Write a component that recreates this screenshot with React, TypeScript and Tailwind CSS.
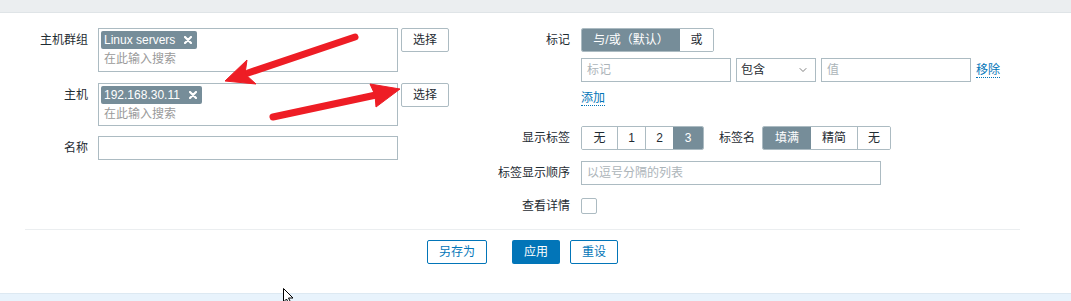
import { ChevronDown } from "lucide-react"

const font = { fontFamily: '"Liberation Sans", Arial, "Noto Sans CJK SC", sans-serif' }

function TagChip({ label }: { label: string }) {
  return (
    <span className="inline-flex h-[18px] items-center gap-[9px] rounded-[2px] bg-[#768d99] pl-[3px] pr-[5px] text-[12px] leading-[18px] text-white">
      {label}
      <svg width="8" height="8" viewBox="0 0 8 8">
        <path d="M1 1L7 7M7 1L1 7" stroke="white" strokeWidth="2.2" strokeLinecap="round" />
      </svg>
    </span>
  )
}

function MultiSelect({ tag, height }: { tag: string; height: string }) {
  return (
    <div className="flex items-start gap-[3px]">
      <div className={`w-[300px] ${height} border border-[#acbbc2] bg-white p-[2px]`}>
        <TagChip label={tag} />
        <div className="pl-[3px] text-[12px] leading-[20px] text-[#9a9a9a]">在此输入搜索</div>
      </div>
      <button className="h-[24px] w-[48px] rounded-[2px] border border-[#acbbc2] bg-white text-[12px] text-[#1f2c33]">
        选择
      </button>
    </div>
  )
}

function Segmented({ items, widths, active }: { items: string[]; widths: string[]; active: number }) {
  return (
    <div className="flex h-[24px] w-fit overflow-hidden rounded-[2px] border border-[#acbbc2]">
      {items.map((item, i) => (
        <div
          key={i}
          className={`flex items-center justify-center text-[12px] ${widths[i]} ${
            i === active ? "bg-[#768d99] text-white" : "bg-white text-[#1f2c33]"
          } ${i > 0 && i !== active && i - 1 !== active ? "border-l border-[#acbbc2]" : ""}`}
        >
          {item}
        </div>
      ))}
    </div>
  )
}

export default function App() {
  return (
    <div className="relative h-[301px] w-full overflow-hidden bg-white text-[#1f2c33]" style={font}>
      <div className="h-[13px] border-b border-[#dfe4e7] bg-[#ebeef0]" />

      <div className="ml-[25px] w-[995px] border-b border-[#ebeef0] pb-[11px] pt-[15px]">
        <div className="flex items-start">
          {/* left column */}
          <div className="grid w-[470px] grid-cols-[63px_1fr] content-start gap-x-[10px] text-[12px]">
            <div className="text-right leading-[24px]">主机群组</div>
            <MultiSelect tag="Linux servers" height="h-[44px]" />

            <div className="mt-[11px] text-right leading-[24px]">主机</div>
            <div className="mt-[11px]">
              <MultiSelect tag="192.168.30.11" height="h-[43px]" />
            </div>

            <div className="mt-[10px] text-right leading-[24px]">名称</div>
            <div className="mt-[10px]">
              <div className="h-[24px] w-[300px] border border-[#acbbc2] bg-white" />
            </div>
          </div>

          {/* right column */}
          <div className="grid grid-cols-[75px_1fr] content-start gap-x-[11px] text-[12px]">
            <div className="text-right leading-[24px]">标记</div>
            <div>
              <Segmented items={["与/或（默认）", "或"]} widths={["w-[98px]", "w-[33px]"]} active={0} />
              <div className="mt-[6px] flex h-[24px] items-center gap-[5px]">
                <div className="flex h-[24px] w-[150px] items-center border border-[#acbbc2] px-[5px] text-[#acb4b9]">
                  标记
                </div>
                <div className="flex h-[24px] w-[80px] items-center justify-between border border-[#acbbc2] pl-[4px] pr-[6px]">
                  包含
                  <ChevronDown size={12} strokeWidth={1.5} className="text-[#555]" />
                </div>
                <div className="flex h-[24px] w-[150px] items-center border border-[#acbbc2] px-[5px] text-[#acb4b9]">
                  值
                </div>
                <span className="border-b border-dotted border-[#0275b8] leading-[14px] text-[#0275b8]">移除</span>
              </div>
              <div className="mt-[4px] flex h-[24px] items-center">
                <span className="border-b border-dotted border-[#0275b8] leading-[14px] text-[#0275b8]">添加</span>
              </div>
            </div>

            <div className="mt-[16px] text-right leading-[24px]">显示标签</div>
            <div className="mt-[16px] flex items-center">
              <Segmented
                items={["无", "1", "2", "3"]}
                widths={["w-[35px]", "w-[28px]", "w-[28px]", "w-[30px]"]}
                active={3}
              />
              <span className="ml-[15px] mr-[7px]">标签名</span>
              <Segmented items={["填满", "精简", "无"]} widths={["w-[48px]", "w-[46px]", "w-[33px]"]} active={0} />
            </div>

            <div className="mt-[11px] text-right leading-[24px]">标签显示顺序</div>
            <div className="mt-[11px]">
              <div className="flex h-[24px] w-[300px] items-center border border-[#acbbc2] px-[5px] text-[#acb4b9]">
                以逗号分隔的列表
              </div>
            </div>

            <div className="mt-[9px] text-right leading-[24px]">查看详情</div>
            <div className="mt-[9px] flex h-[24px] items-center">
              <div className="h-[16px] w-[16px] rounded-[2px] border border-[#acbbc2] bg-white" />
            </div>
          </div>
        </div>
      </div>

      {/* footer buttons */}
      <div className="ml-[25px] mt-[10px] flex w-[995px] justify-center text-[12px]">
        <button className="h-[24px] w-[60px] rounded-[2px] border border-[#0275b8] bg-white text-[#0275b8]">另存为</button>
        <button className="ml-[25px] h-[24px] w-[48px] rounded-[2px] bg-[#0275b8] text-white">应用</button>
        <button className="ml-[10px] h-[24px] w-[48px] rounded-[2px] border border-[#0275b8] bg-white text-[#0275b8]">重设</button>
      </div>

      <div className="absolute bottom-0 left-0 right-0 h-[8px] border-t border-[#dde9f2] bg-[#e8f3fc]" />

      {/* annotation arrows and cursor */}
      <svg className="pointer-events-none absolute left-0 top-0" width="1071" height="301">
        <g fill="#ee1d25" stroke="#ee1d25">
          <line x1="355" y1="37" x2="248" y2="73" strokeWidth="7" strokeLinecap="round" />
          <polygon points="225,81 247,60 245,74 256,84" strokeWidth="1" strokeLinejoin="round" />
          <line x1="273" y1="117" x2="376" y2="95" strokeWidth="7" strokeLinecap="round" />
          <polygon points="400,89 370,84 375,95 376,107" strokeWidth="1" strokeLinejoin="round" />
        </g>
        <path d="M283.5 288.5 L283.5 302 L286.5 299 L289 304 L291 303 L288.5 298 L293 298 Z" fill="white" stroke="black" strokeWidth="1" />
      </svg>
    </div>
  )
}
